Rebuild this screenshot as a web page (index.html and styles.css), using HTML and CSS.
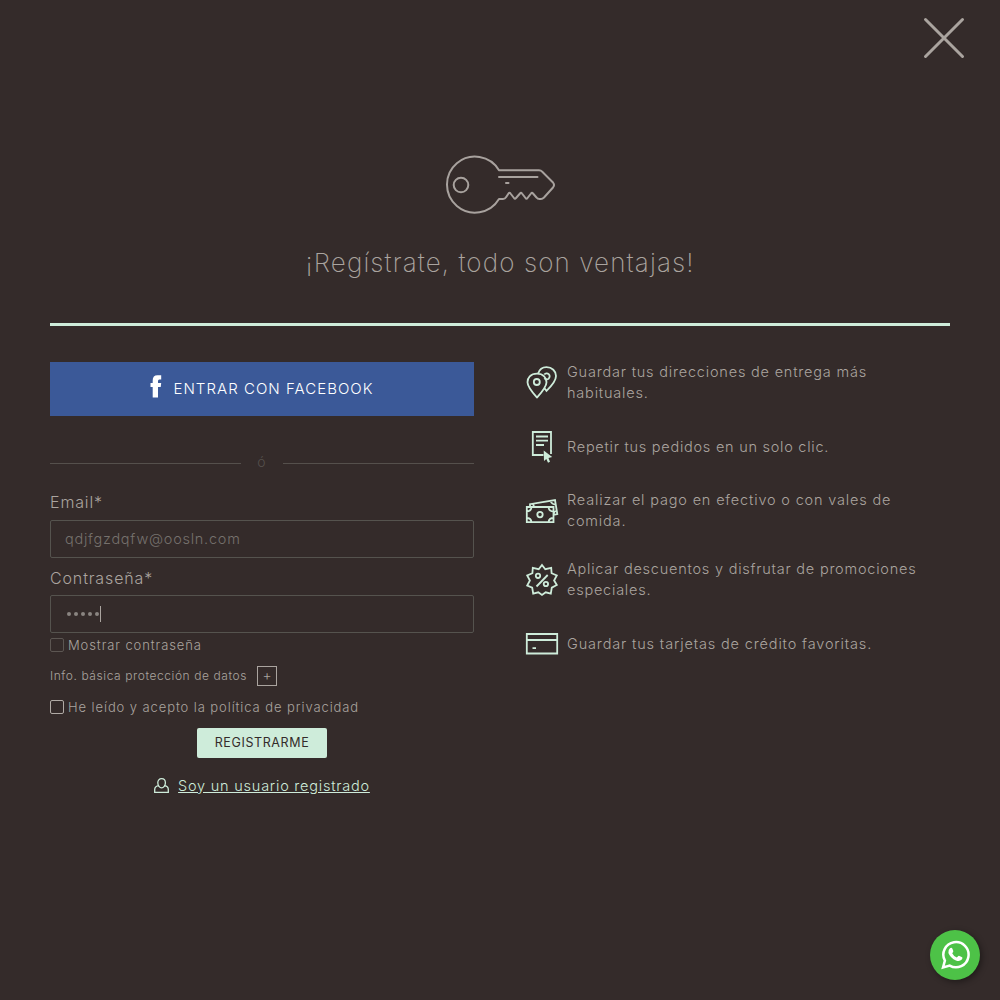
FILE: index.html
```html
<!DOCTYPE html>
<html lang="es">
<head>
<meta charset="utf-8">
<title>Registro</title>
<link rel="stylesheet" href="styles.css">
</head>
<body>
<button class="close" aria-label="Cerrar"><svg width="42" height="42" viewBox="0 0 42 42"><path d="M2.500 2.500L39.500 39.500M39.500 2.500L2.500 39.500" /></svg></button>
<main class="panel">
  <header class="head">
    <svg class="key" width="112" height="60" viewBox="1 0 112 60"><path d="M56 15.200A28 28 0 1 0 56 44H60Q62 44 63.200 42L65.500 38.500Q66.500 37 67.500 38.500L71 43Q72 44.500 73 43L77 38.500Q78 37 79 38.500L82.500 43Q83.500 44.500 84.500 43L88 38.500Q89 37 90 38.500L93.500 42.500Q94.500 44 96.500 44H98Q99.500 44 101 42.500L110 32.500Q112 30 110 27.500L99 16.500Q98 15.200 96 15.200H56"/><circle cx="18" cy="30" r="7.300"/><path d="M56 22H94.500M63 28H65.500"/></svg>
    <h1>¡Regístrate, todo son ventajas!</h1>
  </header>
  <div class="columns">
    <form class="form">
      <button type="button" class="facebook"><svg width="12" height="23" viewBox="0 0 12 23"><path d="M2.700 22.500V12H.5V8H2.700V5.500C2.700 2 4.300.3 7.500.3H11.200V4.500H9.300Q8 4.500 8 6V8H11.200L10.700 12H8V22.500Z"/></svg><span>ENTRAR CON FACEBOOK</span></button>
      <div class="or"><span>ó</span></div>
      <label class="label">Email*</label>
      <div class="input">qdjfgzdqfw@oosln.com</div>
      <label class="label second">Contraseña*</label>
      <div class="input dots"><i></i><i></i><i></i><i></i><i></i><b></b></div>
      <div class="check dim"><span class="box"></span><span>Mostrar contraseña</span></div>
      <div class="info"><span>Info. básica protección de datos</span><span class="plus">+</span></div>
      <div class="check"><span class="box"></span><span>He leído y acepto la política de privacidad</span></div>
      <button type="button" class="submit">REGISTRARME</button>
      <div class="login"><svg width="16" height="16" viewBox="0 0 16 16"><path d="M5 7.700C2.500 8 .7 9.500.7 11.500V14.400H14.300V11.500C14.300 9.500 12.500 8 10.500 7.700"/><path d="M7.600.7C5.200.7 3.800 2.500 3.800 4.800C3.800 7.500 5.600 9.800 7.600 9.800S11.400 7.500 11.400 4.800C11.400 2.500 10 .7 7.600.7Z"/></svg><a>Soy un usuario registrado</a></div>
    </form>
    <ul class="perks">
      <li><svg width="34" height="34" viewBox="0 0 34 34"><path d="M12 8.700C5.300 8.700 2.500 13 2.500 17.200C2.500 22 7.500 27.500 12 32.500C16.500 27.500 21.500 22 21.500 17.200C21.500 13 18.500 8.700 12 8.700ZM13.200 8.600C14.500 4 18 2.200 21.500 2.200C27 2.200 31 6 31 11C31 16 26 21.500 21.500 25.800L19.700 23.500"/><circle cx="11.800" cy="17" r="3"/><path d="M19.300 13.200A3 3 0 1 0 19.300 9.500"/></svg><p>Guardar tus direcciones de entrega más<br>habituales.</p></li>
      <li class="single repeat"><svg width="34" height="34" viewBox="0 0 34 34"><path d="M18.500 25H7.800V2H26V24M11 6.500H23M11 10.700H23M11 15H19"/><path class="solid" d="M18.700 20.500L27.200 27L23.500 28L25 31.800L23 32.800L21.300 29L19 31Z"/></svg><p>Repetir tus pedidos en un solo clic.</p></li>
      <li class="pay"><svg width="34" height="34" viewBox="0 0 34 34"><path d="M1.800 11H28.500V26.200H1.800ZM5 10.500L5 8.200L30 4L32.300 18L28.500 19M1.800 15.500Q6 15.500 6.500 11M23.500 11Q24 15.500 28.500 15.500M1.800 22Q6 22 6.500 26.200M23.500 26.200Q24 22 28.500 22M25.500 5Q27 8.500 30.500 8.500M8 8L9 10M31.500 14.500Q29 15.500 28.700 18"/><circle cx="15" cy="18.600" r="2.700"/></svg><p>Realizar el pago en efectivo o con vales de<br>comida.</p></li>
      <li class="discount"><svg width="34" height="34" viewBox="0 0 34 34"><path d="M17 2L20.300 6.200L26.200 4.900L26.600 10.200L31.800 12.500L29.100 17.500L31.800 22L26.800 24.600L25.800 30.700L20.700 29.300L17 32L13.300 29.300L8.200 30.700L7.200 24.600L2.200 22.500L4.900 17.500L2.200 12.500L7.400 10.200L7.800 4.900L13.700 6.200Z"/><path d="M22.700 12L11.500 23.500"/><circle cx="13" cy="12.800" r="2.200"/><circle cx="20.900" cy="21" r="2.200"/></svg><p>Aplicar descuentos y disfrutar de promociones<br>especiales.</p></li>
      <li class="single card"><svg width="34" height="34" viewBox="0 0 34 34"><path d="M1.800 7H32.200V26.500H1.800ZM1.800 13H32.200M7.500 21.200H11"/></svg><p>Guardar tus tarjetas de crédito favoritas.</p></li>
    </ul>
  </div>
</main>
<a class="whatsapp" aria-label="WhatsApp"><svg width="30" height="30" viewBox="0 0 30 30"><path class="ring" d="M3 27.500L4.900 20.700A12.600 12.600 0 1 1 9.700 25.600Z"/><path class="phone" d="M10 8.200Q11.500 7 12.300 8.500L13.300 11Q13.500 12 12.200 13.200Q13.500 16 16.800 17.600L18.300 16Q18.900 15.600 19.500 15.900L22.200 17.200Q22.900 18.200 21.800 19.600Q19.500 21.800 16 20.400Q10.500 18.300 8.400 13Q7.800 10 10 8.200Z"/></svg></a>
</body>
</html>
```
FILE: styles.css
```css
* { box-sizing: border-box; }
body { margin: 0; height: 1000px; overflow: hidden; background: #342b2a; color: #aaa49f; font: 300 14px/21px Inter, "Noto Sans", sans-serif; }
button { border: 0; padding: 0; font: inherit; }
svg { flex: none; fill: none; }
.close { position: absolute; left: 923px; top: 17px; width: 42px; height: 42px; background: none; }
.close svg { display: block; stroke: #aaa49f; stroke-width: 3; stroke-linecap: round; }
.panel { padding: 155px 50px 0; }
.head { display: flex; flex-direction: column; align-items: center; height: 171px; border-bottom: 3px solid #ceecda; }
.key { stroke: #a8a29e; stroke-width: 2; stroke-linecap: round; stroke-linejoin: round; }
h1 { margin: 30px 0 0; font: 200 26px/36px Inter, sans-serif; letter-spacing: 1.1px; white-space: nowrap; }
.columns { display: grid; grid-template-columns: 424px 424px; column-gap: 52px; padding-top: 36px; }
.form { display: flex; flex-direction: column; }
.facebook { display: flex; align-items: center; justify-content: center; gap: 11px; height: 54px; padding-bottom: 2px; background: #3b5998; color: #fff; font-size: 15px; letter-spacing: 1.04px; }
.facebook svg { fill: #fff; margin-bottom: 4px; }
.or { display: flex; align-items: center; gap: 16px; height: 21px; margin: 37px 0 18px; color: #55504c; }
.or span { margin-bottom: 4px; letter-spacing: 1px; }
.or::before, .or::after { content: ""; flex: 1; height: 1px; background: #55504c; }
.label { height: 28px; font-size: 16px; line-height: 21px; letter-spacing: .86px; }
.second { margin-top: 10px; height: 27px; }
.input { display: flex; align-items: center; height: 38px; padding: 0 14px 2px; border: 1px solid #55534e; border-radius: 2px; color: #76716d; font-size: 14.5px; letter-spacing: .75px; }
.dots { padding-bottom: 0; }
.dots i { width: 4px; height: 4px; margin-right: 3px; border-radius: 50%; background: #8a8581; }
.dots i:first-child { margin-left: 1.5px; }
.dots i:nth-child(5) { margin-right: 1px; }
.dots b { width: 1px; height: 16px; background: #aaa49f; }
.check { display: flex; align-items: center; gap: 4px; height: 20px; margin-top: 2px; font-size: 13px; letter-spacing: .91px; }
.box { width: 14px; height: 14px; border: 1px solid #b0aaa5; border-radius: 2px; }
.dim .box { border-color: #5c5652; }
.info { display: flex; align-items: center; gap: 10px; height: 20px; margin: 11px 0 9px; font-size: 12px; line-height: 18px; letter-spacing: .58px; }
.plus { width: 20px; height: 20px; border: 1px solid #aaa49f; text-align: center; font-size: 14px; line-height: 15px; letter-spacing: 0; }
.submit { align-self: center; width: 130px; height: 30px; margin-top: 11px; padding-bottom: 1px; border-radius: 2px; background: #ceecda; color: #342b2a; font-size: 12.5px; font-weight: 400; letter-spacing: .62px; }
.login { display: flex; align-items: center; justify-content: center; gap: 8px; height: 21px; margin-top: 17px; color: #ceecda; }
.login svg { stroke: #ceecda; stroke-width: 1.3; }
.login a { text-decoration: underline; font-size: 14.5px; letter-spacing: .77px; }
.perks { display: flex; flex-direction: column; gap: 27px; list-style: none; margin: -1px 0 0; padding: 0; }
.perks li { display: flex; align-items: center; gap: 8px; height: 42px; margin-left: -1px; letter-spacing: .8px; }
.perks .single { height: 32px; padding-top: 2px; }
.perks .single p { margin-bottom: 2px; }
.perks .repeat { letter-spacing: .74px; }
.perks .pay { letter-spacing: .83px; }
.perks .discount { letter-spacing: .77px; }
.perks .card { letter-spacing: .85px; }
.perks svg { stroke: #ceecda; stroke-width: 1.8; }
.pay svg { margin-top: 5px; }
.discount svg { margin-top: 2px; }
.perks .solid { fill: #ceecda; stroke: none; }
.perks p { margin: 0; white-space: nowrap; font-size: 14.5px; }
.whatsapp { position: absolute; left: 930px; top: 930px; width: 50px; height: 50px; display: grid; place-items: center; border-radius: 50%; background: #4dc247; box-shadow: 2px 2px 6px rgba(0,0,0,.4); }
.ring { stroke: #fff; stroke-width: 2.5; }
.phone { fill: #fff; }
```
